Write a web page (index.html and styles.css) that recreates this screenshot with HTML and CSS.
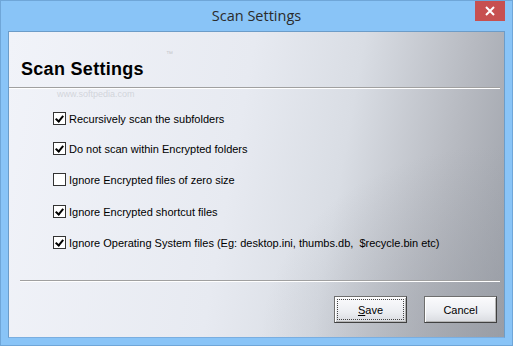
FILE: index.html
```html
<!DOCTYPE html>
<html lang="en">
<head>
  <meta charset="UTF-8">
  <title>Scan Settings</title>
  <link rel="stylesheet" href="styles.css">
</head>
<body>
  <div class="window">
    <div class="titlebar">
      <span class="title">Scan Settings</span>
      <div class="close">
        <svg width="10" height="10" viewBox="0 0 10 10"><path d="M1 1 L9 9 M9 1 L1 9" stroke="#fff" stroke-width="2"/></svg>
      </div>
    </div>
    <div class="client">
      <div class="head">
        <h1>Scan Settings</h1>
        <span class="tm">™</span>
      </div>
      <div class="rule"></div>
      <div class="mark-url">www.softpedia.com</div>

      <div class="options">
        <label class="opt"><span class="box on"></span>Recursively scan the subfolders</label>
        <label class="opt"><span class="box on"></span>Do not scan within Encrypted folders</label>
        <label class="opt"><span class="box"></span>Ignore Encrypted files of zero size</label>
        <label class="opt"><span class="box on"></span>Ignore Encrypted shortcut files</label>
        <label class="opt"><span class="box on"></span>Ignore Operating System files (Eg: desktop.ini, thumbs.db,&nbsp; $recycle.bin etc)</label>
      </div>

      <div class="rule bottom"></div>
      <div class="buttons">
        <button class="focus"><span><u>S</u>ave</span></button>
        <button><span>Cancel</span></button>
      </div>
    </div>
  </div>
</body>
</html>
```

FILE: styles.css
```css
body {
  margin: 0;
  width: 513px;
  height: 346px;
  overflow: hidden;
  font-family: "Liberation Sans", Arial, sans-serif;
}

.window {
  width: 513px;
  height: 346px;
  box-sizing: border-box;
  background: #89c4f7;
  border: 1px solid #6fa6d8;
  display: flex;
  flex-direction: column;
  position: relative;
}

.titlebar {
  height: 29px;
  display: flex;
  align-items: center;
  justify-content: center;
}

.title {
  font-family: "Open Sans", "Noto Sans", sans-serif;
  font-size: 14.5px;
  color: #2b2b2b;
}

.close {
  position: absolute;
  top: 0;
  right: 7px;
  width: 30px;
  height: 20px;
  background: #c75050;
  display: flex;
  align-items: center;
  justify-content: center;
}

.client {
  margin: 1px 7px 7px 7px;
  flex: 1;
  border: 1px solid #6c9cc8;
  border-bottom-color: #7aaee0;
  background:
    radial-gradient(ellipse 70% 90% at 100% 100%, rgba(150,154,162,0.55), rgba(150,154,162,0) 70%),
    linear-gradient(100deg, #f1f3f9 0%, #e7eaf1 45%, #d9dde4 65%, #b7bac1 85%, #9da1a9 100%);
  position: relative;
  display: flex;
  flex-direction: column;
}

.head {
  height: 55px;
  display: flex;
  align-items: flex-end;
  padding-left: 12px;
  position: relative;
}

.head h1 {
  margin: 0 0 7px 0;
  font-size: 18px;
  font-weight: bold;
  letter-spacing: 0.3px;
  color: #000;
}

.tm {
  position: absolute;
  left: 157px;
  top: 18px;
  font-size: 7px;
  color: rgba(170,170,170,0.6);
}

.rule {
  height: 1px;
  background: #a0a0a0;
  border-bottom: 1px solid #fff;
  margin-right: 4px;
}

.mark-url {
  position: absolute;
  left: 48px;
  top: 57px;
  font-size: 9px;
  color: rgba(190,194,200,0.6);
}

.options {
  display: flex;
  flex-direction: column;
  padding: 23px 0 0 44px;
  height: 168px;
}

.opt {
  display: flex;
  align-items: center;
  height: 13px;
  margin-bottom: 18px;
  font-size: 11px;
  color: #000;
}

.opt:nth-child(1) { margin-bottom: 17px; }
.opt:nth-child(3) { margin-bottom: 19px; }

.box {
  width: 11px;
  height: 11px;
  border: 1px solid #333;
  background: #fff;
  margin-right: 3px;
  flex: none;
  position: relative;
}

.box.on::after {
  content: "";
  position: absolute;
  left: 2px;
  top: 0px;
  width: 3px;
  height: 6px;
  border: solid #000;
  border-width: 0 2px 2px 0;
  transform: translate(1px, 1px) rotate(40deg);
}

.rule.bottom {
  margin-left: 11px;
}

.buttons {
  display: flex;
  justify-content: flex-end;
  gap: 17px;
  padding: 14px 7px 0 0;
}

.buttons button {
  width: 73px;
  height: 27px;
  padding: 2px;
  font-family: "Liberation Sans", Arial, sans-serif;
  font-size: 11px;
  color: #000;
  border: 1px solid #6e6e6e;
  border-right-color: #404040;
  border-bottom-color: #404040;
  background: linear-gradient(#fbfbfd, #eceef2 60%, #d9dbe0);
  box-shadow: inset 1px 1px 0 #fff, inset -1px -1px 0 #b5b5b5;
}

.buttons button span {
  display: flex;
  align-items: center;
  justify-content: center;
  height: 100%;
  box-sizing: border-box;
}

.buttons button.focus span {
  border: 1px dotted #444;
}
```
